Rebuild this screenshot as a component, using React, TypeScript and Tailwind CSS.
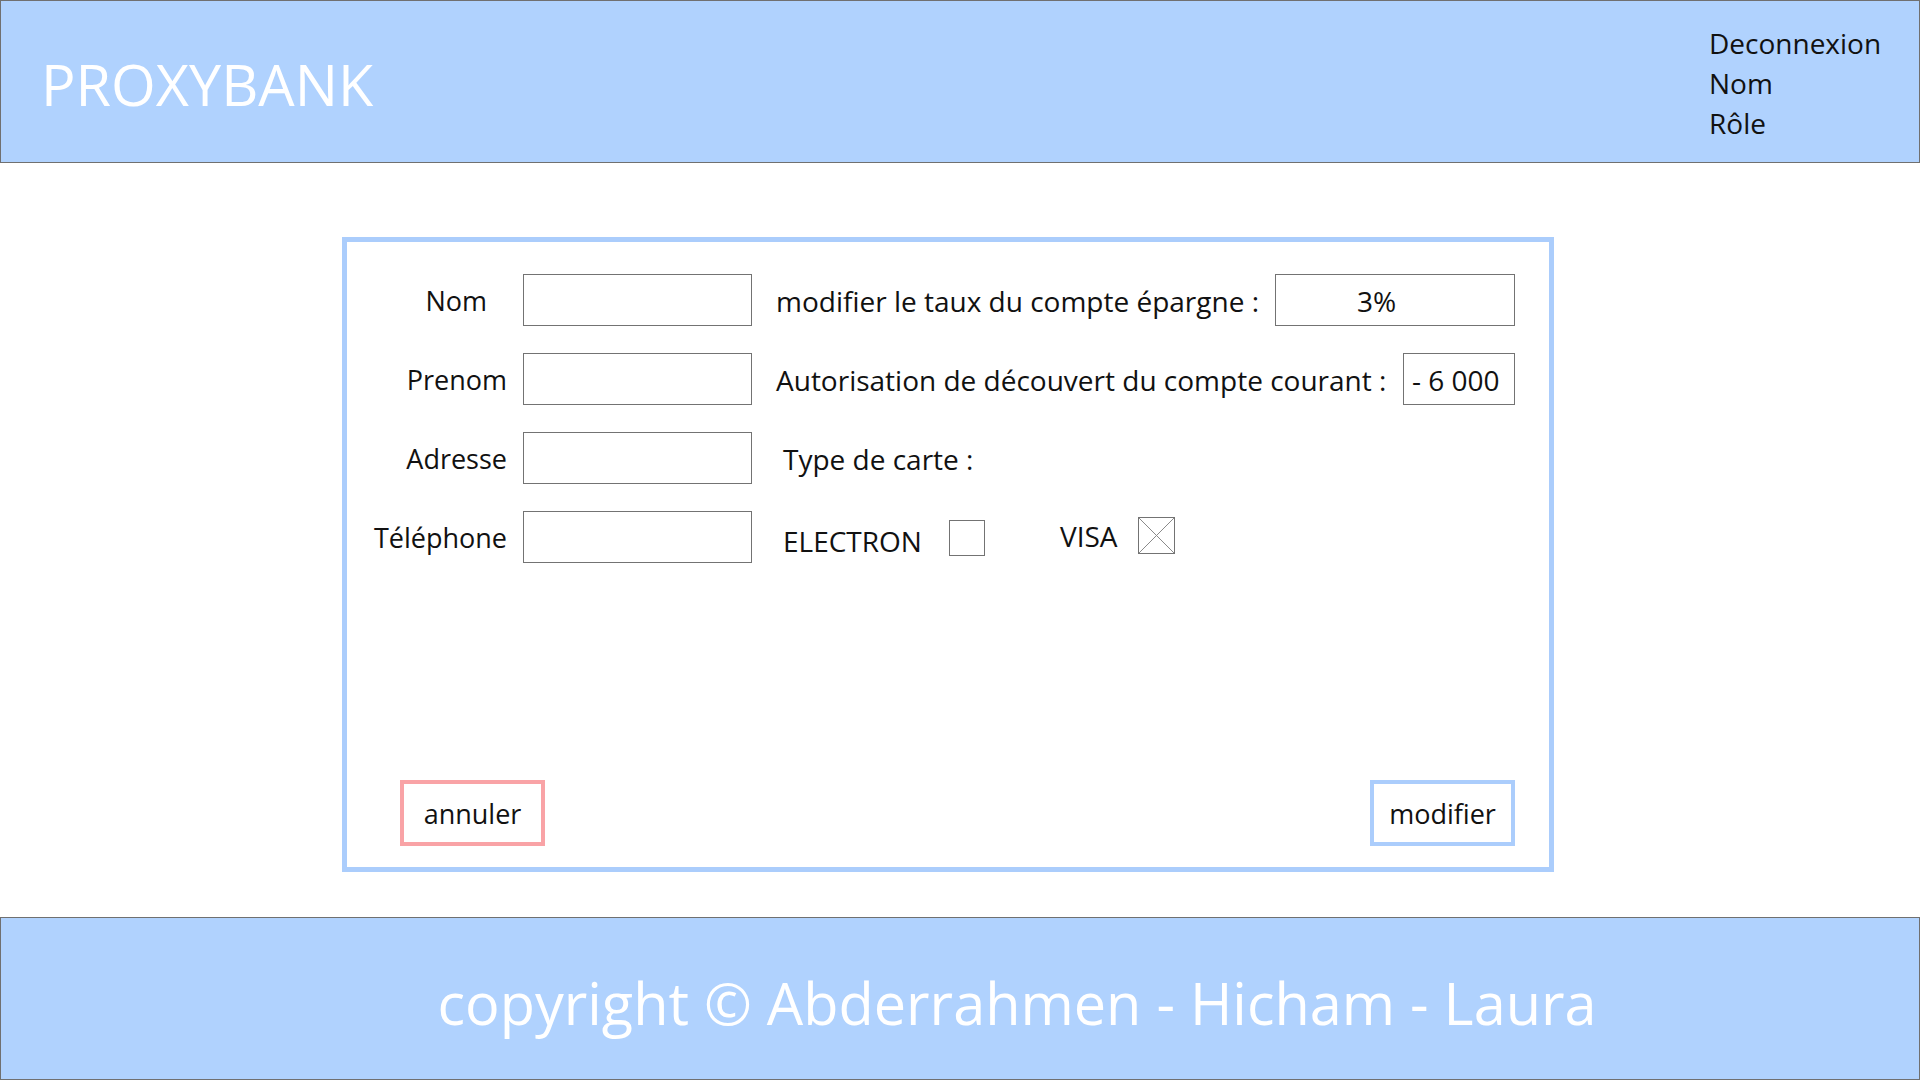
// Proxybank - modifier client
const font = { fontFamily: '"Open Sans", "Noto Sans", sans-serif' };

function Row({
  label,
  labelClass = "",
  children,
}: {
  label: string;
  labelClass?: string;
  children?: React.ReactNode;
}) {
  return (
    <div className="flex h-[52px] items-center">
      <div className={"w-[160px] pt-[2px] text-right text-[27px] text-[#111] " + labelClass}>{label}</div>
      <div className="ml-[16px] h-[52px] w-[229px] border border-[#737373] bg-white" />
      <div className="ml-[24px] flex h-[52px] w-[739px] items-center">{children}</div>
    </div>
  );
}

export default function App() {
  return (
    <div className="flex h-[1080px] w-[1920px] flex-col bg-white" style={font}>
      {/* Header */}
      <header className="flex h-[163px] items-center justify-between border border-[#707070] bg-[#b0d2fe]">
        <h1 className="pl-[40px] pt-[6px] text-[57.5px] leading-none font-normal text-white">PROXYBANK</h1>
        <nav className="mr-[36px] flex w-[174px] flex-col pt-[2px] text-[28px] leading-[40px] text-[#111]">
          <span>Deconnexion</span>
          <span>Nom</span>
          <span>Rôle</span>
        </nav>
      </header>

      {/* Main */}
      <main className="h-[754px]">
        <div className="ml-[342px] mt-[74px] flex h-[635px] w-[1212px] flex-col border-[5px] border-[#abcdfc]">
          <div className="flex flex-col gap-y-[27px] pt-[32px]">
            <Row label="Nom" labelClass="pr-[20px]">
              <div className="flex w-full items-center justify-between">
                <span className="pt-[2px] text-[28px] text-[#111]">modifier le taux du compte épargne :</span>
                <div className="flex h-[52px] w-[240px] items-center border border-[#737373] pl-[81px] pt-[2px] text-[28px] text-[#111]">
                  3%
                </div>
              </div>
            </Row>
            <Row label="Prenom">
              <div className="flex w-full items-center justify-between">
                <span className="pt-[2px] text-[28px] text-[#111]">Autorisation de découvert du compte courant :</span>
                <div className="flex h-[52px] w-[112px] items-center border border-[#737373] pl-[8px] pt-[2px] text-[28px] text-[#111]">
                  - 6 000
                </div>
              </div>
            </Row>
            <Row label="Adresse">
              <span className="pl-[7px] pt-[2px] text-[28px] text-[#111]">Type de carte :</span>
            </Row>
            <Row label="Téléphone">
              <div className="flex items-center pl-[7px]">
                <span className="w-[166px] pt-[7px] text-[28px] text-[#111]">ELECTRON</span>
                <div className="mt-[2px] h-[36px] w-[36px] border border-[#737373]" />
                <div className="mb-[4px] ml-[75px] flex items-center">
                  <span className="w-[78px] pt-[2px] text-[28px] text-[#111]">VISA</span>
                  <svg width="37" height="37" viewBox="0 0 37 37" className="block">
                    <rect x="0.5" y="0.5" width="36" height="36" fill="white" stroke="#737373" />
                    <line x1="1" y1="1" x2="36" y2="36" stroke="#8a8a8a" strokeWidth="1" />
                    <line x1="36" y1="1" x2="1" y2="36" stroke="#8a8a8a" strokeWidth="1" />
                  </svg>
                </div>
              </div>
            </Row>
          </div>

          <div className="mt-auto flex items-center justify-between pb-[21px] pl-[53px] pr-[34px]">
            <button className="flex h-[66px] w-[145px] items-center justify-center border-4 border-[#f9a3a6] pt-[2px] text-[27px] text-[#111]">
              annuler
            </button>
            <button className="flex h-[66px] w-[145px] items-center justify-center border-4 border-[#abcdfc] pt-[2px] text-[27px] text-[#111]">
              modifier
            </button>
          </div>
        </div>
      </main>

      {/* Footer */}
      <footer className="flex h-[163px] items-center justify-center border border-[#707070] bg-[#b0d2fe] pl-[114px] pt-[8px]">
        <p className="text-[57.6px] leading-none text-white">copyright © Abderrahmen - Hicham - Laura</p>
      </footer>
    </div>
  );
}
